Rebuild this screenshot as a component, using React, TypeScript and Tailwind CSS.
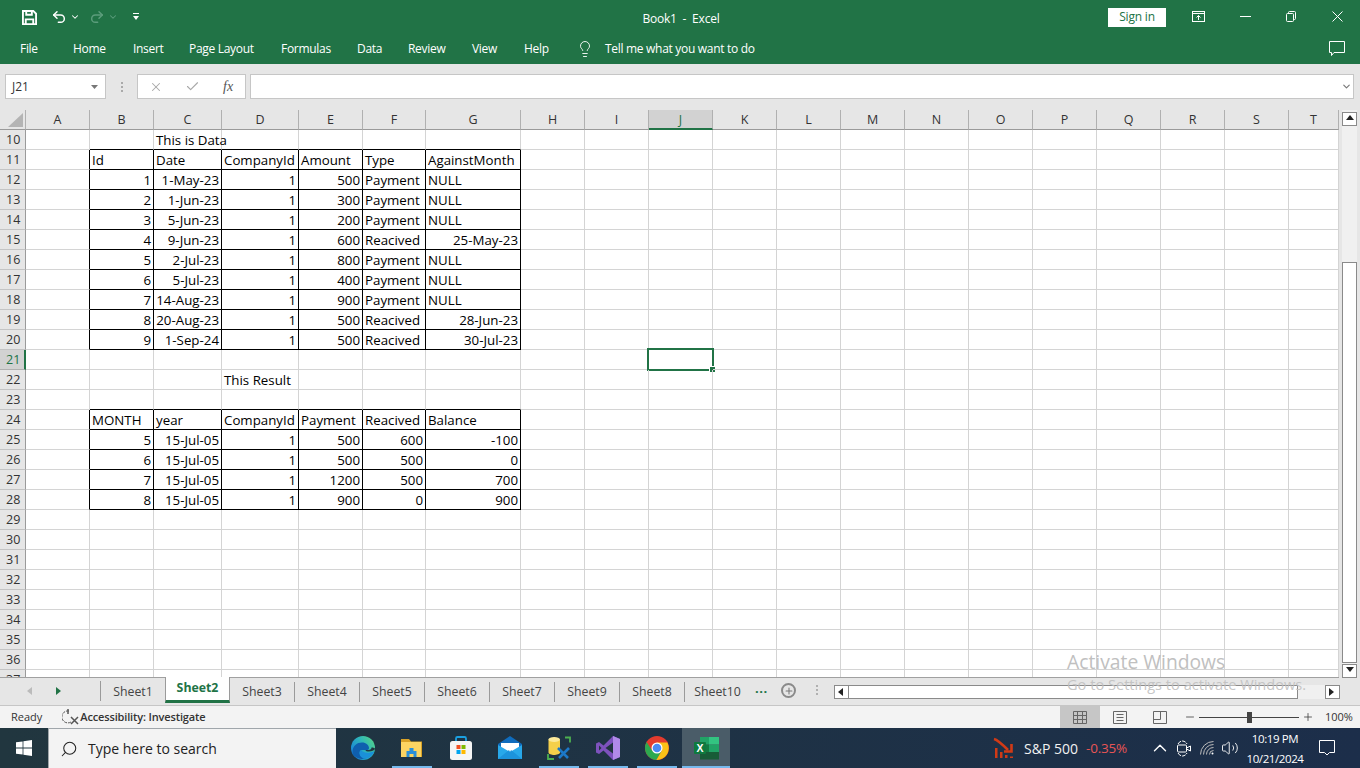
import { ChevronDown, ChevronUp, Lightbulb, Minus, Plus, Search, Undo2, Redo2, X, Check, Volume2 } from "lucide-react";

const COLUMNS = [
  ["A", 64], ["B", 64], ["C", 68], ["D", 77], ["E", 64], ["F", 63], ["G", 95], ["H", 64], ["I", 64], ["J", 64],
  ["K", 64], ["L", 64], ["M", 64], ["N", 64], ["O", 64], ["P", 64], ["Q", 64], ["R", 64], ["S", 64], ["T", 50],
] as const;

const RIBBON = [
  ["Home", "w-[60px]"], ["Insert", "w-[56px]"], ["Page Layout", "w-[92px]"], ["Formulas", "w-[76px]"],
  ["Data", "w-[51px]"], ["Review", "w-[64px]"], ["View", "w-[52px]"], ["Help", "w-[52px]"],
];
const SHEETS = ["Sheet1", "Sheet2", "Sheet3", "Sheet4", "Sheet5", "Sheet6", "Sheet7", "Sheet9", "Sheet8", "Sheet10"];

type Cell = { t: string; right?: boolean };
const l = (t: string): Cell => ({ t });
const r = (t: string): Cell => ({ t, right: true });

// rows keyed by sheet row number, columns B..G
const TABLES: Record<number, Cell[]> = {
  11: ["Id", "Date", "CompanyId", "Amount", "Type", "AgainstMonth"].map(l),
  12: [r("1"), r("1-May-23"), r("1"), r("500"), l("Payment"), l("NULL")],
  13: [r("2"), r("1-Jun-23"), r("1"), r("300"), l("Payment"), l("NULL")],
  14: [r("3"), r("5-Jun-23"), r("1"), r("200"), l("Payment"), l("NULL")],
  15: [r("4"), r("9-Jun-23"), r("1"), r("600"), l("Reacived"), r("25-May-23")],
  16: [r("5"), r("2-Jul-23"), r("1"), r("800"), l("Payment"), l("NULL")],
  17: [r("6"), r("5-Jul-23"), r("1"), r("400"), l("Payment"), l("NULL")],
  18: [r("7"), r("14-Aug-23"), r("1"), r("900"), l("Payment"), l("NULL")],
  19: [r("8"), r("20-Aug-23"), r("1"), r("500"), l("Reacived"), r("28-Jun-23")],
  20: [r("9"), r("1-Sep-24"), r("1"), r("500"), l("Reacived"), r("30-Jul-23")],
  24: ["MONTH", "year", "CompanyId", "Payment", "Reacived", "Balance"].map(l),
  25: [r("5"), r("15-Jul-05"), r("1"), r("500"), r("600"), r("-100")],
  26: [r("6"), r("15-Jul-05"), r("1"), r("500"), r("500"), r("0")],
  27: [r("7"), r("15-Jul-05"), r("1"), r("1200"), r("500"), r("700")],
  28: [r("8"), r("15-Jul-05"), r("1"), r("900"), r("0"), r("900")],
};

const ROWS = Array.from({ length: 28 }, (_, i) => i + 10);
const boxed = (row: number, col: number) => !!TABLES[row] && col >= 1 && col <= 6;

function SheetCell({ row, col }: { row: number; col: number }) {
  const data = boxed(row, col) ? TABLES[row][col - 1] : undefined;
  const blackRight = boxed(row, col) || boxed(row, col + 1);
  const blackBottom = boxed(row, col) || boxed(row + 1, col);
  const selected = row === 21 && col === 9;
  let text = data?.t;
  if (row === 10 && col === 2) text = "This is Data";
  if (row === 22 && col === 3) text = "This Result";
  return (
    <div
      className={`relative flex h-5 items-center border-r border-b px-[2px] pt-[2px] whitespace-nowrap ${blackRight ? "border-r-black" : "border-r-[#d4d4d4]"} ${blackBottom ? "border-b-black" : "border-b-[#d4d4d4]"} ${data?.right ? "justify-end" : "justify-start"}`}
    >
      {text}
      {selected && (
        <span className="absolute -top-[2px] -left-[2px] h-[23px] w-[67px] border-2 border-[#217346]">
          <span className="absolute -right-[4px] -bottom-[4px] h-[7px] w-[7px] border border-white bg-[#217346]" />
        </span>
      )}
    </div>
  );
}

function Sheet() {
  return (
    <div className="min-w-0 flex-1 overflow-hidden">
      <div className="flex h-5">
        <div className="flex w-[26px] items-end justify-end border-r border-b border-r-[#b0b0b0] border-b-[#9a9a9a] pr-[2px] pb-[2px]">
          <svg width="15" height="14" viewBox="0 0 15 14"><path d="M15 0v14H0z" fill="#b4b4b4" /></svg>
        </div>
        {COLUMNS.map(([name, w]) => (
          <div
            key={name}
            style={{ width: w }}
            className={`flex shrink-0 items-center justify-center border-r pt-[2px] text-[12.5px] ${name === "J" ? "border-r-[#b0b0b0] border-b-2 border-b-[#217346] bg-[#d2d2d2] text-[#217346]" : "border-b border-r-[#b0b0b0] border-b-[#9a9a9a] text-[#333]"}`}
          >
            {name}
          </div>
        ))}
      </div>
      <div className="h-[548px] overflow-hidden">
        {ROWS.map((row) => (
          <div key={row} className="flex h-5 text-[13.3px] leading-none text-black">
            <div
              className={`flex w-[26px] shrink-0 items-center border-r border-b pt-[2px] pl-[6px] text-[12.5px] ${row === 21 ? "border-r-2 border-r-[#217346] border-b-[#b0b0b0] bg-[#d2d2d2] text-[#217346]" : "border-r-[#9a9a9a] border-b-[#c4c4c4] text-[#333]"}`}
            >
              {row}
            </div>
            {COLUMNS.map(([name, w], col) => (
              <div key={name} style={{ width: w }} className="shrink-0 bg-white">
                <SheetCell row={row} col={col} />
              </div>
            ))}
          </div>
        ))}
      </div>
    </div>
  );
}

function ScrollButton({ dir }: { dir: "up" | "down" | "left" | "right" }) {
  const points = { up: "0,5 4,0 8,5", down: "0,0 4,5 8,0", left: "5,0 0,4 5,8", right: "0,0 5,4 0,8" }[dir];
  return (
    <div className="flex h-[14px] w-[15px] shrink-0 items-center justify-center border border-[#8a8a8a] bg-white">
      <svg width="8" height="8" viewBox="0 0 8 8"><polygon points={points} fill="#222" /></svg>
    </div>
  );
}

function ExcelIcon() {
  return (
    <svg width="25" height="24" viewBox="0 0 25 24">
      <rect x="6" y="1" width="9" height="7.500" fill="#21a366" />
      <rect x="15" y="1" width="10" height="7.500" fill="#33c481" />
      <rect x="6" y="8.500" width="9" height="7.500" fill="#107c41" />
      <rect x="15" y="8.500" width="10" height="7.500" fill="#21a366" />
      <rect x="6" y="16" width="19" height="7.500" fill="#185c37" />
      <rect x="0" y="6" width="12" height="12" rx="1" fill="#0f7a3f" />
      <text x="6" y="15.800" textAnchor="middle" fontSize="10.500" fontWeight="700" fill="#fff" fontFamily="Liberation Sans, sans-serif">X</text>
    </svg>
  );
}

function TaskIcon({ children, className, open }: { children: React.ReactNode; className: string; open?: boolean }) {
  return (
    <div className={`flex shrink-0 flex-col items-center ${className}`}>
      <div className="flex flex-1 items-center justify-center pt-[1px]">{children}</div>
      <div className={`h-[2px] w-10 ${open ? "bg-[#76b9ed]" : ""}`} />
    </div>
  );
}

function Taskbar() {
  return (
    <div className="flex h-10 items-stretch bg-linear-to-r from-[#21363f] to-[#1c2e4a] text-white">
      <div className="flex w-12 items-center justify-center">
        <svg width="16" height="16" viewBox="0 0 16 16" fill="#fff">
          <path d="M0 2.300 6.600 1.400V7.600H0zM7.400 1.300 16 0V7.600H7.400zM0 8.400H6.600V14.600L0 13.700zM7.400 8.400H16V16L7.400 14.700z" />
        </svg>
      </div>
      <div className="flex w-[288px] items-center gap-[10px] border-t border-l border-[#a0a6ab] bg-[#f3f3f3] pl-[11px] text-[14px] text-[#222]">
        <Search className="h-[18px] w-[18px] -scale-x-100 text-[#222]" strokeWidth={1.400} />
        Type here to search
      </div>
      <div className="ml-[3px] flex">
        <TaskIcon className="w-[48px]">
          <svg width="24" height="24" viewBox="0 0 24 24">
            <defs>
              <linearGradient id="edgeTop" x1="1" y1="0" x2="0" y2="0.600">
                <stop offset="0" stopColor="#5ad67f" />
                <stop offset="0.5" stopColor="#2fb8b8" />
                <stop offset="1" stopColor="#1a86d8" />
              </linearGradient>
            </defs>
            <circle cx="12" cy="12" r="12" fill="url(#edgeTop)" />
            <path d="M1.500 17.500C1 10 6 6.500 11 6.500c4 0 7 2.500 7 5.500 0 1.500-1 2-2.500 2H11c-2 0-3 2-2 4.500 1 2.500 4 3.500 7 3-5 3-11.500 1-14.500-3.500z" fill="#0f5fae" />
            <path d="M24 13c-1 1.500-3 2.500-6 2.500-2 0-3.500-.5-3.500-1.500h3c2 0 3-1 3-2.500 2 0 3.500 .5 3.500 1.500z" fill="#21363f" />
            <path d="M16 22.500c-3 .5-6-.5-7-3-1-2.500-.5-4.500 1-5.500 2 3 7 4 13.500 1-1 3.500-4 6.500-7.500 7.500z" fill="#1a90d8" />
          </svg>
        </TaskIcon>
        <TaskIcon className="w-[49px]" open>
          <svg width="21" height="18" viewBox="0 0 21 18">
            <path d="M0 0h8l2 2.500h11V18H0z" fill="#d9a227" />
            <rect y="3" width="20" height="15" fill="#fcd462" />
            <path d="M5.500 18v-6h3V9h4v3h3v6h-3v-3h-4v3z" fill="#2a8fd8" />
          </svg>
        </TaskIcon>
        <TaskIcon className="w-[49px]">
          <svg width="24" height="24" viewBox="0 0 24 24">
            <path d="M7 6V2.500A1.500 1.500 0 0 1 8.500 1h7A1.500 1.500 0 0 1 17 2.500V6" fill="none" stroke="#1ba1e2" strokeWidth="1.800" />
            <rect x="1" y="5" width="22" height="19" rx="2.500" fill="#f5f5f5" />
            <rect x="7.500" y="9" width="4" height="4" fill="#f25022" />
            <rect x="12.500" y="9" width="4" height="4" fill="#7fba00" />
            <rect x="7.500" y="14" width="4" height="4" fill="#00a4ef" />
            <rect x="12.500" y="14" width="4" height="4" fill="#ffb900" />
          </svg>
        </TaskIcon>
        <TaskIcon className="w-[49px]">
          <svg width="24" height="24" viewBox="0 0 24 24">
            <path d="M0 8 12 0l12 8v15H0z" fill="#0f6cbd" />
            <path d="M3 7h18v5l-9 5-9-5z" fill="#fff" />
            <path d="M0 9l12 7 12-7v14H0z" fill="#28a8ea" />
            <path d="M0 23 11 14l1 2 1-2 11 9z" fill="#1c93dc" />
          </svg>
        </TaskIcon>
        <TaskIcon className="w-[49px]" open>
          <svg width="24" height="24" viewBox="0 0 24 24">
            <path d="M18 1.500h5v5M1 18v5h6" fill="none" stroke="#4caf50" strokeWidth="1.800" />
            <path d="M1.500 3.500v13c0 1.500 3 2.500 5.500 2.500s6-1 6-2.500v-13z" fill="#f5d04a" />
            <ellipse cx="7.200" cy="3.500" rx="5.700" ry="2.500" fill="#fbe99a" />
            <path d="M11 12l10 10M22 12 12 22" stroke="#1c78c8" strokeWidth="2.600" />
          </svg>
        </TaskIcon>
        <TaskIcon className="w-[49px]" open>
          <svg width="24" height="24" viewBox="0 0 24 24">
            <path d="M17 0 7.500 9.500 3 6 0 7.500v9L3 18l4.500-3.500L17 24l7-3V3z" fill="#7d52bd" />
            <path d="M17 6.500v11L9.500 12z" fill="#21343f" />
            <path d="M17 0l7 3v18l-7 3v-6.500V6.500z" fill="#b18ae8" />
            <path d="M3 9.500v5L5.500 12z" fill="#21343f" />
          </svg>
        </TaskIcon>
        <TaskIcon className="w-[49px]" open>
          <svg width="24" height="24" viewBox="0 0 24 24">
            <circle cx="12" cy="12" r="12" fill="#e33b2e" />
            <path d="M1.600 6 7.200 14.700H16.800L11.400 24A12 12 0 0 1 1.600 6z" fill="#2da94f" />
            <path d="M12 6.500H22.400A12 12 0 0 1 11.400 24L16.800 14.700z" fill="#fbc116" />
            <circle cx="12" cy="12" r="5.500" fill="#fff" />
            <circle cx="12" cy="12" r="4.300" fill="#4a8af4" />
          </svg>
        </TaskIcon>
        <div className="ml-px flex w-[48px] flex-col bg-[#4a5c68]">
          <div className="flex flex-1 items-center justify-center pt-[1px]"><ExcelIcon /></div>
          <div className="h-[2px] bg-[#76b9ed]" />
        </div>
      </div>
      <div className="ml-auto flex items-center">
        <svg width="23" height="24" viewBox="0 0 23 24">
          <path d="M1 3c4 1 9 6 14 11" fill="none" stroke="#d13a16" strokeWidth="2.600" />
          <path d="M11 15.500h7.500V8" fill="none" stroke="#d13a16" strokeWidth="2.600" />
          <path d="M2 12h2.500v10H2zM7 16h2.500v6H7zM12 19h2.500v3H12zM17 20.500h3V22h-3z" fill="#d13a16" />
        </svg>
        <span className="ml-[8px] w-[53px] text-[14px] whitespace-nowrap text-[#f2f2f2]">S&amp;P 500</span>
        <span className="ml-[9px] w-[41px] text-[13.500px] tracking-[-0.2px] whitespace-nowrap text-[#e85555]">-0.35%</span>
        <ChevronUp className="ml-[22px] h-[22px] w-[22px] text-white" strokeWidth={1.500} />
        <svg width="16" height="17" viewBox="0 0 16 17" fill="none" stroke="#fff" strokeWidth="1" className="ml-[5px]">
          <path d="M2 4C3 2 5 1 6.500 1S10 2 11 4M2 13c1 2 3 3 4.500 3S10 15 11 13" strokeDasharray="4 1" />
          <rect x="1.500" y="5" width="9" height="7" rx="1" />
          <path d="m10.500 8 4-2v5l-4-2" />
        </svg>
        <svg width="14" height="14" viewBox="0 0 14 14" fill="none" stroke="#bdbdbd" strokeWidth="1" className="ml-[8px]">
          <path d="M.5 13.500a13 13 0 0 1 13-13M3.500 13.500a10 10 0 0 1 10-10M6.500 13.500a7 7 0 0 1 7-7M9.500 13.500a4 4 0 0 1 4-4" />
          <circle cx="12.500" cy="12.500" r="1" fill="#fff" stroke="none" />
        </svg>
        <Volume2 className="ml-[7px] h-[18px] w-[18px] text-white" strokeWidth={1.200} />
        <div className="mt-[2px] ml-[6px] flex w-[60px] flex-col items-center text-[11.500px] leading-[20px] tracking-[-0.4px] text-white">
          <span>10:19 PM</span>
          <span>10/21/2024</span>
        </div>
        <svg width="16" height="16" viewBox="0 0 16 16" fill="none" stroke="#fff" className="mr-[25px] ml-[14px]">
          <path d="M.500.500h15v12H10.500L8 15l-2.500-2.500H.500z" />
        </svg>
      </div>
    </div>
  );
}

export default function App() {
  return (
    <div className="relative flex h-[768px] w-[1360px] flex-col overflow-hidden bg-[#e6e6e6] font-['Open_Sans','Noto_Sans',sans-serif]">
      {/* Title bar */}
      <div className="flex h-8 items-center bg-[#217346] text-white">
        <svg width="15" height="15" viewBox="0 0 16 16" fill="none" stroke="#fff" strokeWidth="2" className="mt-[2px] ml-[22px]">
          <path d="M1 1h11l3 3v11H1z" />
          <path d="M4.500 1v4h6V1M4 15v-5h8v5" />
        </svg>
        <Undo2 className="mt-[2px] ml-[14px] h-[16px] w-[16px]" strokeWidth={2.200} />
        <ChevronDown className="mt-[2px] ml-[3px] h-[10px] w-[10px]" strokeWidth={2.500} />
        <Redo2 className="mt-[2px] ml-[9px] h-[16px] w-[16px] text-[#5c9d7c]" strokeWidth={2.200} />
        <ChevronDown className="mt-[2px] ml-[3px] h-[10px] w-[10px] text-[#5c9d7c]" strokeWidth={2.500} />
        <svg width="6" height="8" viewBox="0 0 6 8" fill="#fff" className="mt-[2px] ml-[15px]">
          <rect width="6" height="1" />
          <path d="M0 3h6L3 7z" />
        </svg>
        <div className="mt-[5px] ml-[477px] w-[130px] text-center text-[12px] tracking-[-0.2px]">Book1&nbsp; -&nbsp; Excel</div>
        <div className="mt-[2px] ml-[362px] flex h-[19px] w-[58px] items-center justify-center bg-white text-[12px] tracking-[-0.2px] text-[#217346]">Sign in</div>
        <svg width="13" height="11" viewBox="0 0 13 11" fill="none" stroke="#fff" className="ml-[26px]">
          <rect x=".5" y=".5" width="12" height="10" />
          <path d="M.5 2.500h12M6.500 9V4.500M4.500 6.500l2-2 2 2" />
        </svg>
        <svg width="11" height="1" viewBox="0 0 11 1" className="ml-[35px]"><rect width="11" height="1" fill="#fff" /></svg>
        <svg width="10" height="11" viewBox="0 0 10 11" fill="none" stroke="#fff" className="ml-[35px]">
          <rect x=".5" y="2.500" width="7" height="8" rx="1" />
          <path d="M2.500 2.500V1.500a1 1 0 0 1 1-1h5a1 1 0 0 1 1 1v6a1 1 0 0 1-1 1h-1" />
        </svg>
        <svg width="11" height="11" viewBox="0 0 11 11" stroke="#fff" className="ml-[36px]"><path d="M.5.500l10 10M10.500.500l-10 10" /></svg>
      </div>
      {/* Ribbon tabs */}
      <div className="flex h-8 items-center bg-[#217346] pt-[1px] text-[12px] tracking-[-0.3px] text-white">
        <div className="ml-[20px] w-[53px]">File</div>
        {RIBBON.map(([name, w]) => (
          <div key={name} className={w}>{name}</div>
        ))}
        <Lightbulb className="h-[18px] w-[18px]" strokeWidth={1.200} />
        <div className="ml-[11px]">Tell me what you want to do</div>
        <svg width="16" height="15" viewBox="0 0 16 15" fill="none" stroke="#fff" className="mr-[15px] ml-auto">
          <path d="M.500.500h15v11H5l-2.500 3v-3H.500z" />
        </svg>
      </div>
      {/* Formula bar */}
      <div className="flex h-[46px] items-start pt-[10px] pr-[6px] pl-[5px]">
        <div className="flex h-[25px] w-[101px] items-center justify-between border border-[#c6c6c6] bg-white pr-[7px] pl-[6px] text-[12px] text-[#333]">
          J21
          <svg width="7" height="4" viewBox="0 0 7 4"><path d="M0 0h7L3.500 4z" fill="#777" /></svg>
        </div>
        <div className="flex h-[25px] w-[31px] flex-col items-center justify-center gap-[2px]">
          <span className="h-[2px] w-[2px] bg-[#aaa]" />
          <span className="h-[2px] w-[2px] bg-[#aaa]" />
          <span className="h-[2px] w-[2px] bg-[#aaa]" />
        </div>
        <div className="flex h-[25px] w-[109px] items-center border border-[#c6c6c6] bg-white text-[#a8a8a8]">
          <X className="ml-[11px] h-[14px] w-[14px]" strokeWidth={1.800} />
          <Check className="ml-[22px] h-[15px] w-[15px]" strokeWidth={1.800} />
          <span className="ml-[23px] font-['Liberation_Serif',serif] text-[14px] leading-none text-[#555] italic">fx</span>
        </div>
        <div className="ml-[4px] flex h-[25px] min-w-0 flex-1 items-center justify-end border border-[#c6c6c6] bg-white pr-px">
          <ChevronDown className="h-[11px] w-[11px] text-[#777]" strokeWidth={2.500} />
        </div>
      </div>
      {/* Sheet area */}
      <div className="flex h-[568px] items-stretch">
        <div className="w-[1339px] shrink-0 overflow-hidden border-b border-[#a0a0a0]">
          <Sheet />
        </div>
        <div className="ml-[3px] flex w-[15px] flex-col bg-[#f0f0f0] pt-[2px]">
          <ScrollButton dir="up" />
          <div className="mt-[136px] h-[401px] border border-[#8a8a8a] bg-white" />
          <div className="mt-[1px]"><ScrollButton dir="down" /></div>
        </div>
      </div>
      {/* Sheet tabs */}
      <div className="flex h-[28px] items-start border-b border-[#c6c6c6] text-[12.300px] text-[#444]">
        <div className="flex h-[25px] w-[101px] items-center">
          <svg width="5" height="8" viewBox="0 0 5 8" className="ml-[27px]"><path d="M5 0v8L0 4z" fill="#bbb" /></svg>
          <svg width="5" height="8" viewBox="0 0 5 8" className="ml-[24px]"><path d="M0 0v8l5-4z" fill="#217346" /></svg>
          <span className="mt-[1px] ml-auto h-5 w-px bg-[#9a9a9a]" />
        </div>
        {SHEETS.map((s, i) =>
          s === "Sheet2" ? (
            <div key={s} className="-mt-px flex h-[26px] w-[65px] items-center justify-center border-x border-b-[3px] border-x-[#9a9a9a] border-b-[#217346] bg-white font-bold text-[#217346]">
              {s}
            </div>
          ) : (
            <div key={s} className={`mt-[4px] flex h-5 items-center justify-center ${i === 0 ? "w-[64px]" : "w-[65px]"} ${i === 0 || i === 9 ? "" : "border-r border-[#9a9a9a]"}`}>
              {s}
            </div>
          ),
        )}
        <div className="mt-[1px] ml-[5px] w-[14px] text-[13px] font-bold tracking-[0.5px] text-[#217346]">...</div>
        <div className="mt-[5px] ml-[12px] flex h-[15px] w-[15px] items-center justify-center rounded-full border-2 border-[#8a8a8a]">
          <Plus className="h-[10px] w-[10px] text-[#777]" strokeWidth={2.500} />
        </div>
        <div className="mt-[7px] ml-[20px] flex w-[2px] flex-col gap-[2px]">
          <span className="h-[2px] w-[2px] bg-[#b0b0b0]" />
          <span className="h-[2px] w-[2px] bg-[#b0b0b0]" />
          <span className="h-[2px] w-[2px] bg-[#b0b0b0]" />
        </div>
        <div className="mt-[7px] ml-[16px] flex">
          <ScrollButton dir="left" />
          <div className="-ml-px h-[14px] w-[450px] border border-[#8a8a8a] bg-white" />
          <div className="h-[14px] w-[27px] bg-[#f0f0f0]" />
          <ScrollButton dir="right" />
        </div>
      </div>
      {/* Status bar */}
      <div className="flex h-[22px] items-center bg-[#f3f3f3] text-[11px] text-[#333]">
        <span className="ml-[11px]">Ready</span>
        <svg width="17" height="16" viewBox="0 0 17 16" fill="none" stroke="#555" className="ml-[20px]">
          <path d="M7 2a6 6 0 1 0 2 11" strokeDasharray="3 1" />
          <path d="M6 0v5M9 8l7 7M16 8l-7 7" strokeWidth="1.500" />
        </svg>
        <span className="ml-px font-semibold tracking-[-0.15px]">Accessibility: Investigate</span>
        <div className="ml-auto flex h-full items-center">
          <div className="flex h-full w-[40px] items-center justify-center bg-[#c6c6c6]">
            <svg width="14" height="13" viewBox="0 0 14 13" fill="none" stroke="#666"><path d="M.500.500h13v12H.500zM.500 4.500h13M.500 8.500h13M4.500.500v12M9.500.500v12" /></svg>
          </div>
          <div className="flex w-[40px] items-center justify-center">
            <svg width="14" height="13" viewBox="0 0 14 13" fill="none" stroke="#666"><path d="M.500.500h13v12H.500zM3.500 3.500h7M3.500 6.500h7M3.500 9.500h7" /></svg>
          </div>
          <div className="flex w-[40px] items-center justify-center">
            <svg width="14" height="13" viewBox="0 0 14 13" fill="none" stroke="#666"><path d="M.500.500h13v12H.500zM.500 8.500h7V.500" /></svg>
          </div>
          <Minus className="ml-[4px] h-[12px] w-[12px] text-[#333]" strokeWidth={1.500} />
          <div className="relative ml-[3px] flex h-[12px] w-[100px] items-center justify-center">
            <div className="h-px w-full bg-[#444]" />
            <div className="absolute h-[11px] w-[5px] bg-[#444]" />
          </div>
          <Plus className="ml-[3px] h-[12px] w-[12px] text-[#333]" strokeWidth={1.500} />
          <span className="mr-[8px] ml-[11px] w-[27px]">100%</span>
        </div>
      </div>
      <Taskbar />
      {/* Windows activation watermark */}
      <div className="absolute top-[648px] left-[1067px] text-[19.300px] text-[#c0c0c0]">Activate Windows</div>
      <div className="absolute top-[674px] left-[1067px] text-[14.600px] text-[#c0c0c0]/90">Go to Settings to activate Windows.</div>
    </div>
  );
}
